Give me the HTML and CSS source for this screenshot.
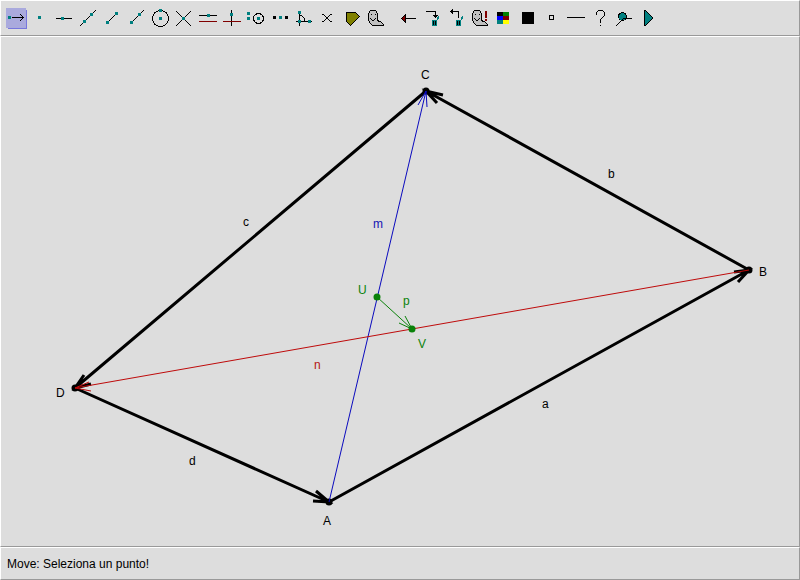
FILE: index.html
```
<!DOCTYPE html>
<html lang="it">
<head>
<meta charset="utf-8">
<title>Vettori</title>
<link rel="stylesheet" href="styles.css">
</head>
<body>
<div class="app">
<header class="panel toolbar">
<div class="group">
<button class="tool" aria-label="Move"><svg viewBox="0 0 24 24"><path class="shade" d="M4 4h19v19H4z"/><path class="active" d="M2 2h20v20H2z"/><path class="k" d="M8 11.500h12"/><path class="b" d="M16 8h1v1h-1zM17 9h1v1h-1zM18 10h1v1h-1zM18 12h1v1h-1zM17 13h1v1h-1zM16 14h1v1h-1z"/><path class="t" d="M4 10h3v3H4z"/></svg></button>
<button class="tool" aria-label="Point"><svg viewBox="0 0 24 24"><path class="t" d="M10 10h3v3h-3z"/></svg></button>
<button class="tool" aria-label="Line"><svg viewBox="0 0 24 24"><path class="k" d="M4 12.500h16"/><path class="t" d="M9 11h3v3H9z"/></svg></button>
<button class="tool" aria-label="Line through points"><svg viewBox="0 0 24 24"><path class="k" d="M4 20L20 4"/><path class="t" d="M7 14h3v3H7zM14 7h3v3h-3z"/></svg></button>
<button class="tool" aria-label="Segment"><svg viewBox="0 0 24 24"><path class="k" d="M7 17L17 7"/><path class="t" d="M6 15h3v3H6zM15 6h3v3h-3z"/></svg></button>
<button class="tool" aria-label="Ray"><svg viewBox="0 0 24 24"><path class="k" d="M7 17L20 4"/><path class="t" d="M6 15h3v3H6zM14 7h3v3h-3z"/></svg></button>
<button class="tool" aria-label="Circle"><svg viewBox="0 0 24 24"><circle class="k" cx="12.500" cy="12.500" r="8"/><path class="t" d="M11 11h3v3h-3zM11 3h3v3h-3z"/></svg></button>
<button class="tool" aria-label="Intersection"><svg viewBox="0 0 24 24"><path class="k" d="M4 5l15 15M4 20L19 5"/><path class="t" d="M10 11h3v3h-3z"/></svg></button>
<button class="tool" aria-label="Parallel"><svg viewBox="0 0 24 24"><path class="k" d="M3 9.500h18"/><path class="r" d="M3 15.500h18"/><path class="t" d="M11 8h3v3h-3z"/></svg></button>
<button class="tool" aria-label="Perpendicular"><svg viewBox="0 0 24 24"><path class="k" d="M11.500 4v16"/><path class="r" d="M3 15.500h18"/><path class="t" d="M10 7h3v3h-3z"/></svg></button>
<button class="tool" aria-label="Compass"><svg viewBox="0 0 24 24"><circle class="k" cx="14.500" cy="12.500" r="5"/><path class="t" d="M3 6h3v3H3zM3 11h3v3H3zM13 11h3v3h-3z"/></svg></button>
<button class="tool" aria-label="Midpoint"><svg viewBox="0 0 24 24"><path class="b" d="M5 10h3v3H5zM17 10h3v3h-3z"/><path class="t" d="M11 10h3v3h-3z"/></svg></button>
<button class="tool" aria-label="Angle"><svg viewBox="0 0 24 24"><path class="k" d="M7.500 5v15M4 15.500h16"/><path class="b" d="M8 9h2v1H8zM10 10h1v1h-1zM11 11h1v1h-1zM12 12h1v3h-1z"/><path class="t" d="M6 5h3v3H6zM6 14h3v3H6zM16 14h3v3h-3z"/></svg></button>
<button class="tool" aria-label="Expression"><svg viewBox="0 0 24 24"><path class="b" d="M6 8h2v1H6zM8 9h1v1H8zM9 10h1v1H9zM10 11h2v2h-2zM9 13h1v1H9zM8 14h1v1H8zM6 15h2v1H6zM14 8h2v1h-2zM13 9h1v1h-1zM12 10h1v1h-1zM12 13h1v1h-1zM13 14h1v1h-1zM14 15h2v1h-2z"/></svg></button>
<button class="tool" aria-label="Area"><svg viewBox="0 0 24 24"><path class="k olive" d="M6.500 6.500h9l4 4-9 9-4-4z"/></svg></button>
<button class="tool" aria-label="Hide"><svg viewBox="0 0 24 24"><path class="k ghost" d="M6.500 17.500l-2-3v-7l2-3h5l2 3v6l1 2h2l3 3v1h-11z"/><path class="b" d="M7 8h1v1H7zM11 8h1v1h-1zM6 12h1v1H6zM7 13h1v1H7zM8 14h2v1H8zM10 13h1v1h-1zM11 12h1v1h-1z"/></svg></button>
</div>
<div class="group">
<button class="tool" aria-label="Back"><svg viewBox="0 0 24 24"><path class="k" d="M9 12.500h11"/><path class="k red" d="M5.500 12.500l4-4v8z"/></svg></button>
<button class="tool" aria-label="Delete"><svg viewBox="0 0 24 24"><path class="k" d="M6 5.500h9.500v6M13 9.500h5M14 10.500h3"/><path class="t" d="M12 14h5v6h-5zM17 11h1v3h-1zM18 10h1v3h-1z"/><path class="b" d="M13 15h1v4h-1zM15 15h1v4h-1z"/></svg></button>
<button class="tool" aria-label="Undelete"><svg viewBox="0 0 24 24"><path class="k" d="M7 5.500h7.500v6"/><path class="b" d="M6 5h1v1H6zM7 4h1v3H7zM8 3h1v5H8z"/><path class="t" d="M12 14h5v6h-5zM17 11h1v3h-1zM18 10h1v3h-1z"/><path class="b" d="M13 15h1v4h-1zM15 15h1v4h-1z"/></svg></button>
<button class="tool" aria-label="Show hidden"><svg viewBox="0 0 24 24"><path class="k ghost" d="M6.500 17.500l-2-3v-7l2-3h5l2 3v6l1 2h2l3 3v1h-11z"/><path class="b" d="M7 8h1v1H7zM11 8h1v1h-1zM6 12h1v1H6zM7 13h1v1H7zM8 14h2v1H8zM10 13h1v1h-1zM11 12h1v1h-1z"/><path class="maroon" d="M17 5h2v7h-2zM17 13h2v2h-2z"/></svg></button>
<button class="tool" aria-label="Colour"><svg viewBox="0 0 24 24"><path class="b" d="M5 6h6v4h4v4H9v-4H5z"/><path fill="#008000" d="M11 6h6v4h-6z"/><path fill="#0000ff" d="M5 10h6v4H5z"/><path class="maroon" d="M11 10h6v4h-6z"/><path class="t" d="M5 14h6v4H5z"/><path fill="#ffff00" d="M11 14h6v4h-6z"/></svg></button>
<button class="tool" aria-label="Black"><svg viewBox="0 0 24 24"><path class="b" d="M6 6h12v12H6z"/></svg></button>
<button class="tool" aria-label="Point style"><svg viewBox="0 0 24 24"><path class="k" d="M9.500 9.500h4v4h-4z"/></svg></button>
<button class="tool" aria-label="Line style"><svg viewBox="0 0 24 24"><path class="k" d="M3 11.500h18"/></svg></button>
<button class="tool" aria-label="Help"><svg viewBox="0 0 24 24"><path class="b" d="M8 6h1v3H8zM9 5h1v1H9zM10 4h5v1h-5zM15 5h1v1h-1zM16 6h1v4h-1zM15 10h1v1h-1zM14 11h1v1h-1zM13 12h1v1h-1zM12 13h1v4h-1zM12 19h1v1h-1z"/></svg></button>
<button class="tool" aria-label="Draw"><svg viewBox="0 0 24 24"><circle class="k teal" cx="10.500" cy="10.500" r="4"/><path class="k" d="M4 20l7-7M11 12.500h9"/></svg></button>
<button class="tool" aria-label="Play"><svg viewBox="0 0 24 24"><path class="k teal" d="M8.500 4.500v15h1l7-7v-1l-7-7z"/></svg></button>
</div>
</header>
<main class="panel canvas">
<svg class="figure" viewBox="1 37 798 509" role="img" aria-label="Quadrilatero ABCD">
<g class="side">
<path d="M329 502L749 270M734 272l15-2-11 12"/>
<path d="M749 270L426 91M443 95l-17-4 11 12"/>
<path d="M426 91L75 388M84 375l-9 13 16-4"/>
<path d="M75 388L329 502M316 491l13 11-16-1"/>
</g>
<g><circle cx="329" cy="502" r="3.500"/><circle cx="749" cy="270" r="3.500"/><circle cx="426" cy="91" r="3.500"/><circle cx="75" cy="388" r="3.500"/></g>
<path class="blue" d="M329 502L426 91M418 105l8-14 1 16"/>
<path class="crimson" d="M749 270L75 388M89 382l-14 6 16 3"/>
<path class="green" d="M377 297L412 329M405 316l7 13-13-6"/>
<g class="green-fill"><circle cx="377" cy="297" r="3.500"/><circle cx="412" cy="329" r="3.500"/><text x="358" y="294">U</text><text x="403" y="305">p</text><text x="418" y="348">V</text></g>
<text x="421" y="79">C</text><text x="759" y="276">B</text><text x="56" y="397">D</text><text x="323" y="525">A</text>
<text x="542" y="408">a</text><text x="608" y="178">b</text><text x="243" y="226">c</text><text x="189" y="465">d</text>
<text class="blue-fill" x="373" y="228">m</text><text class="crimson-fill" x="314" y="369">n</text>
</svg>
</main>
<footer class="panel status">Move: Seleziona un punto!</footer>
</div>
</body>
</html>
```
FILE: styles.css
```
* { box-sizing: border-box; }
body { margin: 0; background: #ddd; color: #000; font: 12px/16px "Liberation Sans", Arial, sans-serif; }
.app { display: flex; flex-direction: column; height: 100vh; }
.panel { border: 1px solid; border-color: #fff #999 #999 #fff; }
.toolbar { display: flex; gap: 8px; padding: 5px 3px; }
.group { display: flex; }
.tool { width: 24px; height: 24px; padding: 0; border: 0; background: none; }
.tool svg { display: block; width: 24px; height: 24px; shape-rendering: crispEdges; }
.canvas { flex: 1; min-height: 0; }
.figure { display: block; width: 100%; height: 100%; }
.status { padding: 9px 6px 7px; line-height: 15px; }
.k { fill: none; stroke: #000; }
.r { fill: none; stroke: #800000; }
.t { fill: #008080; }
.b { fill: #000; }
.active { fill: #aaaadd; }
.shade { fill: #7777dd; }
.olive { fill: #808000; }
.ghost { fill: #c0c0c0; }
.red, .maroon { fill: #800000; }
.teal { fill: #008080; }
.side { fill: none; stroke: #000; stroke-width: 3; }
.blue, .crimson, .green { fill: none; stroke: #0a0abe; }
.crimson { stroke: #be0a0a; }
.green { stroke: #0a820a; }
.blue-fill { fill: #1414b4; }
.crimson-fill { fill: #b41414; }
.green-fill { fill: #0a820a; }
```
